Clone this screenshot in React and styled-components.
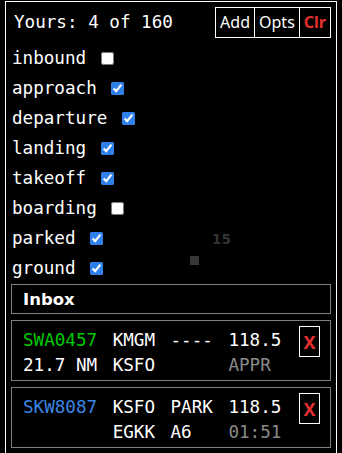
import React, { useState } from 'react';
import styled, { createGlobalStyle } from 'styled-components';

const GlobalStyle = createGlobalStyle`
  html, body {
    margin: 0;
    padding: 0;
    background: #000;
  }
  body {
    overflow: hidden;
    font-family: "DejaVu Sans Mono", monospace;
    color: #fff;
  }
`;

const FILTERS = [
  { key: 'inbound', on: false },
  { key: 'approach', on: true },
  { key: 'departure', on: true },
  { key: 'landing', on: true },
  { key: 'takeoff', on: true },
  { key: 'boarding', on: false },
  { key: 'parked', on: true },
  { key: 'ground', on: true },
];

const FLIGHTS = [
  {
    id: 'SWA0457',
    kind: 'arrival',
    top: ['KMGM', '----', '118.5'],
    bottom: ['21.7 NM', 'KSFO', '', 'APPR'],
  },
  {
    id: 'SKW8087',
    kind: 'departure',
    top: ['KSFO', 'PARK', '118.5'],
    bottom: ['', 'EGKK', 'A6', '01:51'],
  },
];

function App() {
  const [filters, setFilters] = useState(
    Object.fromEntries(FILTERS.map((f) => [f.key, f.on]))
  );

  const toggle = (key) => setFilters((prev) => ({ ...prev, [key]: !prev[key] }));

  return (
    <>
      <GlobalStyle />
      <Panel>
        <Header>
          <Count>Yours: 4 of 160</Count>
          <ButtonGroup>
            <TopButton>Add</TopButton>
            <TopButton>Opts</TopButton>
            <TopButton $danger>Clr</TopButton>
          </ButtonGroup>
        </Header>

        {FILTERS.map((f) => (
          <FilterRow key={f.key}>
            {f.key}{' '}
            <Check
              type="checkbox"
              checked={filters[f.key]}
              onChange={() => toggle(f.key)}
            />
          </FilterRow>
        ))}

        <InboxTitle>Inbox</InboxTitle>

        {FLIGHTS.map((fl) => (
          <Card key={fl.id}>
            <Cells>
              <Callsign $kind={fl.kind}>{fl.id}</Callsign>
              {fl.top.map((t, i) => (
                <span key={'t' + i}>{t}</span>
              ))}
              {fl.bottom.map((t, i) => (
                <Cell key={'b' + i} $dim={i === 3}>{t}</Cell>
              ))}
            </Cells>
            <RemoveButton>X</RemoveButton>
          </Card>
        ))}

        <MapLabel>15</MapLabel>
        <MapMarker />
      </Panel>
    </>
  );
}

// Styles
const Panel = styled.div`
  position: relative;
  margin: 1px 5px 0;
  border: 1px solid #fff;
  padding: 5px 5px 12px;
  min-height: 460px;
  box-sizing: border-box;
`;

const Header = styled.div`
  display: flex;
  justify-content: space-between;
  align-items: center;
  padding-left: 3px;
  margin-bottom: 5px;
`;

const Count = styled.span`
  font-size: 17.6px;
  margin-top: -2px;
`;

const ButtonGroup = styled.div`
  display: flex;
`;

const TopButton = styled.button`
  font-family: "Noto Sans", sans-serif;
  font-size: 16px;
  font-weight: ${(p) => (p.$danger ? 700 : 400)};
  color: ${(p) => (p.$danger ? '#e53030' : '#fff')};
  background: #000;
  border: 1px solid #fff;
  padding: 4px 4px;
  line-height: 21px;
  margin: 0;
  & + & {
    border-left: none;
  }
`;

const FilterRow = styled.div`
  font-size: 17.6px;
  line-height: 20.5px;
  padding: 4.75px 0 4.75px 1px;
`;

const Check = styled.input`
  vertical-align: middle;
  margin: 0 3px 0 4px;
  width: 13px;
  height: 13px;
  accent-color: #2f80ea;
`;

const InboxTitle = styled.div`
  font-family: "DejaVu Sans", sans-serif;
  font-weight: 700;
  font-size: 16.5px;
  line-height: 19px;
  border: 1px solid #808080;
  padding: 5px 11px 4px;
  margin: 1px 0 6px;
`;

const Card = styled.div`
  display: flex;
  align-items: flex-start;
  border: 1px solid #808080;
  padding: 5px 10px 2px 11px;
  margin-bottom: 6px;
`;

const Cells = styled.div`
  display: grid;
  grid-template-columns: repeat(4, auto);
  justify-content: start;
  column-gap: 15.5px;
  font-size: 17.6px;
  line-height: 25px;
  margin-top: 2px;
`;

const Callsign = styled.span`
  color: ${(p) => (p.$kind === 'arrival' ? '#00c800' : '#3a86e4')};
`;

const Cell = styled.span`
  color: ${(p) => (p.$dim ? '#8a8a8a' : '#fff')};
`;

const RemoveButton = styled.button`
  margin-left: auto;
  width: 21px;
  height: 31px;
  padding: 0;
  background: #000;
  border: 1px solid #fff;
  color: #e53030;
  font-family: "Noto Sans", sans-serif;
  font-weight: 700;
  font-size: 18px;
  line-height: 1;
`;

const MapLabel = styled.span`
  position: absolute;
  left: 206px;
  top: 229px;
  font-family: "DejaVu Sans", sans-serif;
  font-weight: 700;
  font-size: 13.5px;
  color: #333;
`;

const MapMarker = styled.span`
  position: absolute;
  left: 184px;
  top: 254px;
  width: 9px;
  height: 9px;
  background: #383838;
`;

export default App;
